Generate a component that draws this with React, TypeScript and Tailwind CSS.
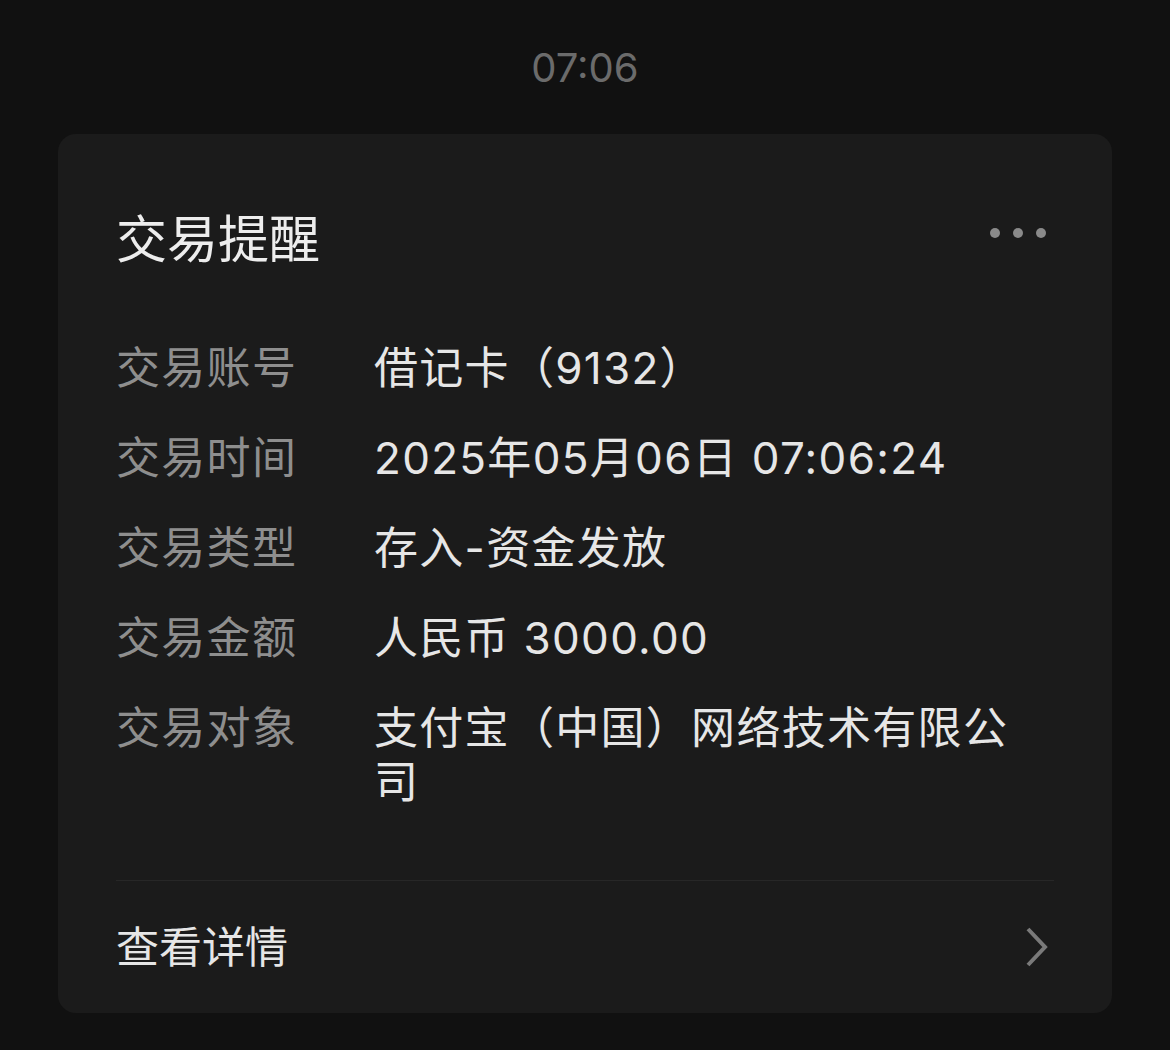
const rows: { label: string; value: string }[] = [
  { label: "交易账号", value: "借记卡（9132）" },
  { label: "交易时间", value: "2025年05月06日 07:06:24" },
  { label: "交易类型", value: "存入-资金发放" },
  { label: "交易金额", value: "人民币 3000.00" },
  { label: "交易对象", value: "支付宝（中国）网络技术有限公司" },
];

const font = {
  fontFamily: '"Inter", "Noto Sans CJK SC", sans-serif',
};

export default function App() {
  return (
    <div
      className="min-h-[1050px] w-full overflow-hidden bg-[#111111] px-[58px] pt-[40px]"
      style={font}
    >
      <div className="text-center text-[40px] leading-[56px] text-[#6b6b6b]">
        07:06
      </div>

      <div className="mt-[38px] rounded-[18px] bg-[#1b1b1b] px-[58px]">
        <div className="flex items-center justify-between pt-[78px]">
          <h1 className="text-[51px] leading-[56px] text-[#ededed]">交易提醒</h1>
          <div className="mb-[14px] mr-[8px] flex gap-[13px]">
            <span className="h-[10px] w-[10px] rounded-full bg-[#8a8a8a]" />
            <span className="h-[10px] w-[10px] rounded-full bg-[#8a8a8a]" />
            <span className="h-[10px] w-[10px] rounded-full bg-[#8a8a8a]" />
          </div>
        </div>

        <div className="mt-[73px] flex flex-col gap-[36px]">
          {rows.map((r) => (
            <div
              key={r.label}
              className="flex text-[44px] leading-[54px] tracking-[1.3px]"
            >
              <div className="w-[258px] shrink-0 text-[#8e8e8e]">{r.label}</div>
              <div className="max-w-[660px] text-[#e6e6e6]">{r.value}</div>
            </div>
          ))}
        </div>

        <div className="mt-[71px] h-px bg-[#272727]" />

        <div className="flex items-center justify-between pb-[39px] pt-[39px]">
          <span className="text-[43px] leading-[54px] text-[#e6e6e6]">查看详情</span>
          <svg
            width="26"
            height="42"
            viewBox="0 0 26 42"
            fill="none"
            stroke="#7a7a7a"
            strokeWidth="4"
            className="mr-[4px]"
          >
            <path d="M4 3 L21 21 L4 39" />
          </svg>
        </div>
      </div>
    </div>
  );
}
